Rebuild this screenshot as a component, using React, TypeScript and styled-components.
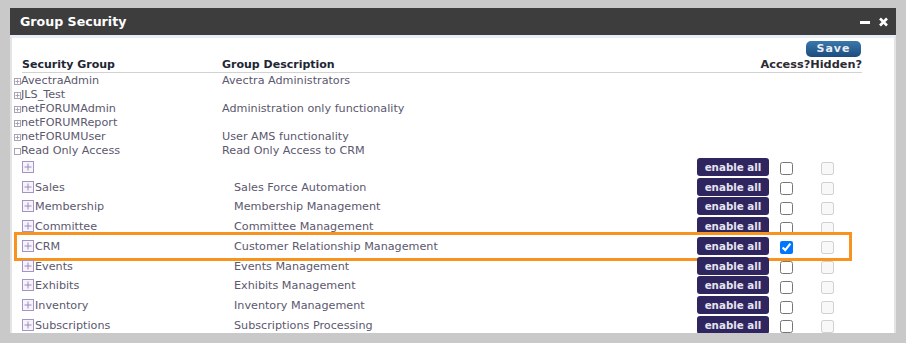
import React from "react";
import styled, { createGlobalStyle } from "styled-components";

const GlobalStyle = createGlobalStyle`
  html, body { margin: 0; padding: 0; background: #c9c9c9; }
  body { font-family: "DejaVu Sans", Verdana, sans-serif; }
`;

const Page = styled.div`
  width: 906px;
  height: 343px;
  box-sizing: border-box;
  padding: 8px 10px 10px 10px;
  background: #c9c9c9;
`;

const Window = styled.section`
  height: 100%;
  display: flex;
  flex-direction: column;
  background: #fff;
`;

const TitleBar = styled.header`
  height: 27px;
  flex: none;
  box-sizing: border-box;
  background: #3d3d3d;
  display: flex;
  align-items: center;
  justify-content: space-between;
  padding: 0 8px 1px 10px;
`;

const Title = styled.h1`
  margin: 0;
  font: bold 12.6px "DejaVu Sans", Verdana, sans-serif;
  color: #ffffff;
`;

const WindowControls = styled.div`
  display: flex;
  align-items: center;
  gap: 9px;
  padding-top: 1px;
`;

const Body = styled.div`
  flex: 1;
  min-height: 0;
  overflow: hidden;
  border-top: 3px solid #e8eef5;
  border-left: 2px solid #e4e4e4;
  border-right: 2px solid #e4e4e4;
  padding: 0 32px 0 2px;
  font-size: 11.2px;
  color: #5c586e;
`;

const Toolbar = styled.div`
  display: flex;
  justify-content: flex-end;
  padding-top: 3px;
`;

const SaveButton = styled.button`
  width: 55px;
  height: 16px;
  padding: 0;
  border: none;
  border-radius: 5px;
  background: linear-gradient(#3a78ad, #1c4c7c);
  color: #e9eef6;
  font: bold 11px "DejaVu Sans", Verdana, sans-serif;
  letter-spacing: 1px;
  line-height: 16px;
  margin-right: 1px;
`;

const HeaderRow = styled.div`
  display: grid;
  grid-template-columns: 200px 1fr auto;
  align-items: end;
  height: 15px;
  margin-left: 8px;
  border-bottom: 1px solid #d2d2d2;
  font: bold 11px "DejaVu Sans", Verdana, sans-serif;
  color: #1e2634;
  line-height: 14px;
`;

const HeaderRight = styled.span`
  font-size: 11.3px;
  color: #2c2a33;
`;

const TopRow = styled.div`
  display: grid;
  grid-template-columns: 208px 1fr;
  align-items: start;
  height: 14px;
  line-height: 16px;
  white-space: nowrap;
`;

const Name = styled.span`
  display: flex;
  align-items: center;
  height: 16px;
`;

const NestedRow = styled.div`
  position: relative;
  display: grid;
  grid-template-columns: 212px 1fr 72px 24px 41px;
  align-items: center;
  height: 19.75px;
  margin-left: 8px;
  padding-right: 28px;
  white-space: nowrap;
`;

const NestedName = styled.span`
  display: flex;
  align-items: center;
  gap: 1px;
`;

const NestedText = styled.span`
  padding-top: 1px;
`;

const EnableAll = styled.button`
  width: 72px;
  height: 18px;
  padding: 0;
  border: none;
  border-radius: 3px;
  background: #2f2660;
  color: #e6e4ef;
  font: bold 10.3px "DejaVu Sans", Verdana, sans-serif;
  line-height: 18px;
`;

const Check = styled.input`
  justify-self: end;
  width: 13px;
  height: 13px;
  margin: 0;
  position: relative;
  top: 2px;
`;

const Highlight = styled.div`
  position: absolute;
  left: -8px;
  right: 10px;
  top: -4px;
  bottom: -5px;
  box-sizing: border-box;
  border: 3.5px solid #f7931e;
  pointer-events: none;
`;

const SmallToggle = ({ open }: { open?: boolean }) => (
  <svg width="7" height="7" viewBox="0 0 7 7" style={{ flex: "none" }}>
    <rect x="0.5" y="0.5" width="6" height="6" fill="#fff" stroke="#a9a3b8" />
    {!open && <line x1="3.5" y1="1.5" x2="3.5" y2="5.5" stroke="#a9a3b8" />}
    {!open && <line x1="1.5" y1="3.5" x2="5.5" y2="3.5" stroke="#a9a3b8" />}
  </svg>
);

const PlusBox = () => (
  <svg width="12" height="12" viewBox="0 0 12 12" style={{ flex: "none" }}>
    <rect x="0.5" y="0.5" width="11" height="11" fill="#f6f3fb" stroke="#a494c6" />
    <line x1="6" y1="2.5" x2="6" y2="9.5" stroke="#9c8cc0" />
    <line x1="2.5" y1="6" x2="9.5" y2="6" stroke="#9c8cc0" />
  </svg>
);

const MinimizeIcon = () => (
  <svg width="10" height="10" viewBox="0 0 10 10">
    <rect x="0" y="4" width="10" height="3" fill="#fff" />
  </svg>
);

const CloseIcon = () => (
  <svg width="9" height="10" viewBox="0 0 9 10">
    <path d="M1 1.5 L8 8.5 M8 1.5 L1 8.5" stroke="#fff" strokeWidth="2.6" />
  </svg>
);

const topGroups: { name: string; desc: string; open?: boolean }[] = [
  { name: "AvectraAdmin", desc: "Avectra Administrators" },
  { name: "JLS_Test", desc: "" },
  { name: "netFORUMAdmin", desc: "Administration only functionality" },
  { name: "netFORUMReport", desc: "" },
  { name: "netFORUMUser", desc: "User AMS functionality" },
  { name: "Read Only Access", desc: "Read Only Access to CRM", open: true },
];

const modules: { name: string; desc: string; checked?: boolean; highlight?: boolean }[] = [
  { name: "", desc: "" },
  { name: "Sales", desc: "Sales Force Automation" },
  { name: "Membership", desc: "Membership Management" },
  { name: "Committee", desc: "Committee Management" },
  { name: "CRM", desc: "Customer Relationship Management", checked: true, highlight: true },
  { name: "Events", desc: "Events Management" },
  { name: "Exhibits", desc: "Exhibits Management" },
  { name: "Inventory", desc: "Inventory Management" },
  { name: "Subscriptions", desc: "Subscriptions Processing" },
];

export default function App() {
  return (
    <>
      <GlobalStyle />
      <Page>
        <Window>
          <TitleBar>
            <Title>Group Security</Title>
            <WindowControls>
              <MinimizeIcon />
              <CloseIcon />
            </WindowControls>
          </TitleBar>
          <Body>
            <Toolbar>
              <SaveButton>Save</SaveButton>
            </Toolbar>
            <HeaderRow>
              <span>Security Group</span>
              <span>Group Description</span>
              <HeaderRight>Access?Hidden?</HeaderRight>
            </HeaderRow>
            {topGroups.map((g) => (
              <TopRow key={g.name}>
                <Name>
                  <SmallToggle open={g.open} />
                  {g.name}
                </Name>
                <span>{g.desc}</span>
              </TopRow>
            ))}
            {modules.map((m, i) => (
              <NestedRow key={i}>
                <NestedName>
                  <PlusBox />
                  <NestedText>{m.name}</NestedText>
                </NestedName>
                <NestedText>{m.desc}</NestedText>
                <EnableAll>enable all</EnableAll>
                <Check type="checkbox" readOnly checked={!!m.checked} />
                <Check type="checkbox" disabled />
                {m.highlight && <Highlight />}
              </NestedRow>
            ))}
          </Body>
        </Window>
      </Page>
    </>
  );
}
